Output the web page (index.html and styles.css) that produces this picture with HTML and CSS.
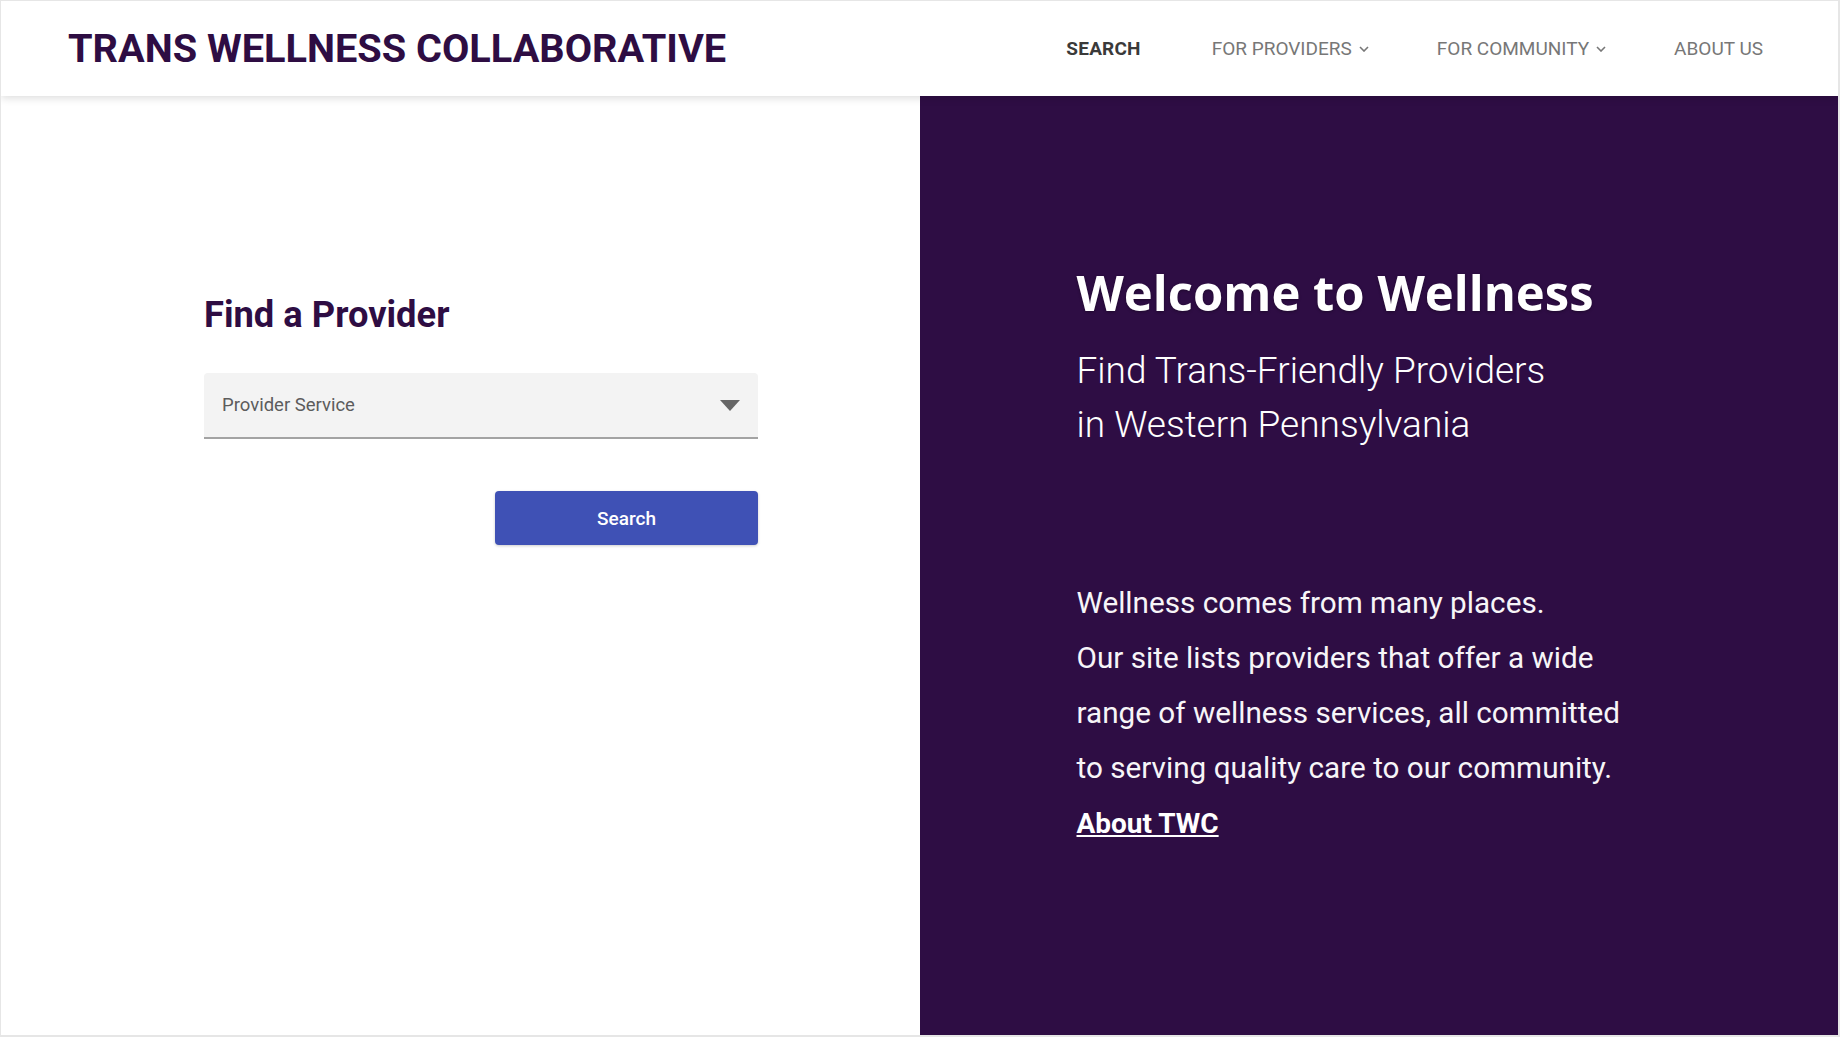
FILE: index.html
```html
<!DOCTYPE html>
<html lang="en">
<head>
<meta charset="UTF-8">
<title>Trans Wellness Collaborative</title>
<link rel="stylesheet" href="styles.css">
</head>
<body>

<div class="page">

<!-- Top bar -->
<header class="topbar">
    <div class="brand">TRANS WELLNESS COLLABORATIVE</div>
    <nav class="nav">
        <a class="nav-item active" href="#">SEARCH</a>
        <a class="nav-item" href="#">FOR PROVIDERS
            <svg class="chev" viewBox="0 0 10 6"><path d="M1 1l4 4 4-4"/></svg></a>
        <a class="nav-item" href="#">FOR COMMUNITY
            <svg class="chev" viewBox="0 0 10 6"><path d="M1 1l4 4 4-4"/></svg></a>
        <a class="nav-item" href="#">ABOUT US</a>
    </nav>
</header>

<main class="split">

    <!-- Left: search form -->
    <section class="finder">
        <h2>Find a Provider</h2>
        <div class="select">
            <span class="select-label">Provider Service</span>
            <span class="select-arrow"></span>
        </div>
        <div class="actions">
            <button class="search-btn">Search</button>
        </div>
    </section>

    <!-- Right: welcome text -->
    <section class="welcome">
        <h1>Welcome to Wellness</h1>
        <p class="tagline">Find Trans-Friendly Providers<br>in Western Pennsylvania</p>
        <p class="blurb">Wellness comes from many places.<br>
            Our site lists providers that offer a wide range of wellness services, all committed to serving quality care to our community.<br>
            <a href="#">About TWC</a></p>
    </section>

</main>
</div>

</body>
</html>
```

FILE: styles.css
```css
* {box-sizing: border-box;}
body {margin: 0; font-family: Roboto, "Liberation Sans", sans-serif; background: #fff;}

.page {
    width: 1840px;
    height: 1037px;
    border: 1px solid #e6e6e6;
    border-right-width: 2px;
    border-bottom-width: 2px;
    display: flex;
    flex-direction: column;
    overflow: hidden;
}

/* header */
.topbar {
    height: 95px;
    flex: none;
    display: flex;
    align-items: center;
    justify-content: space-between;
    padding: 0 75px 0 67px;
    background: #fff;
    box-shadow: 0 2px 8px rgba(0,0,0,0.14);
    position: relative;
    z-index: 2;
}
.brand {font-size: 39.7px; font-weight: 700; color: #2e0d43;}
.nav {display: flex; align-items: center; gap: 68px;}
.nav-item {
    display: flex;
    align-items: center;
    gap: 7px;
    font-size: 19px;
    color: #777;
    text-decoration: none;
}
.nav-item.active {color: #3a3a3a; font-weight: 700; letter-spacing: 0.2px; margin-right: 3px;}
.chev {width: 10px; height: 6px; fill: none; stroke: #777; stroke-width: 1.6;}

/* two halves */
.split {flex: 1; display: flex;}
.finder {width: 50%; padding: 197px 0 0 203px;}
.welcome {width: 50%; background: #2e0d44; color: #fff; padding: 164px 0 0 157px;}

.finder h2 {margin: 0 0 36px; font-size: 36.3px; line-height: 44px; font-weight: 700; color: #2e0d43;}
.select {
    width: 554px;
    height: 66px;
    display: flex;
    align-items: center;
    justify-content: space-between;
    padding: 0 18px;
    background: #f3f3f3;
    border-bottom: 2px solid #a3a3a3;
    border-radius: 4px 4px 0 0;
}
.select-label {font-size: 18.5px; color: #5c5c5c;}
.select-arrow {width: 0; height: 0; border-left: 10.5px solid transparent; border-right: 10.5px solid transparent; border-top: 11px solid #666;}
.actions {width: 554px; display: flex; justify-content: flex-end; margin-top: 52px;}
.search-btn {
    width: 263px;
    height: 54px;
    border: none;
    border-radius: 4px;
    background: #3f51b5;
    color: #fff;
    font-family: Roboto, sans-serif;
    font-size: 19px;
    font-weight: 500;
    box-shadow: 0 1px 3px rgba(0,0,0,0.2);
    cursor: pointer;
}

.welcome h1 {margin: 0 0 19px; font-family: "Open Sans", sans-serif; font-size: 49px; line-height: 65px; font-weight: 700; text-shadow: 0 1px 3px rgba(0,0,0,0.35);}
.tagline {margin: 0 0 123px; font-size: 37px; line-height: 54px; font-weight: 300;}
.blurb {margin: 0; width: 560px; font-size: 29.7px; line-height: 55px; color: #f7f5f8;}
.blurb a {color: #fff; font-size: 28px; font-weight: 700; text-decoration: underline;}
```
